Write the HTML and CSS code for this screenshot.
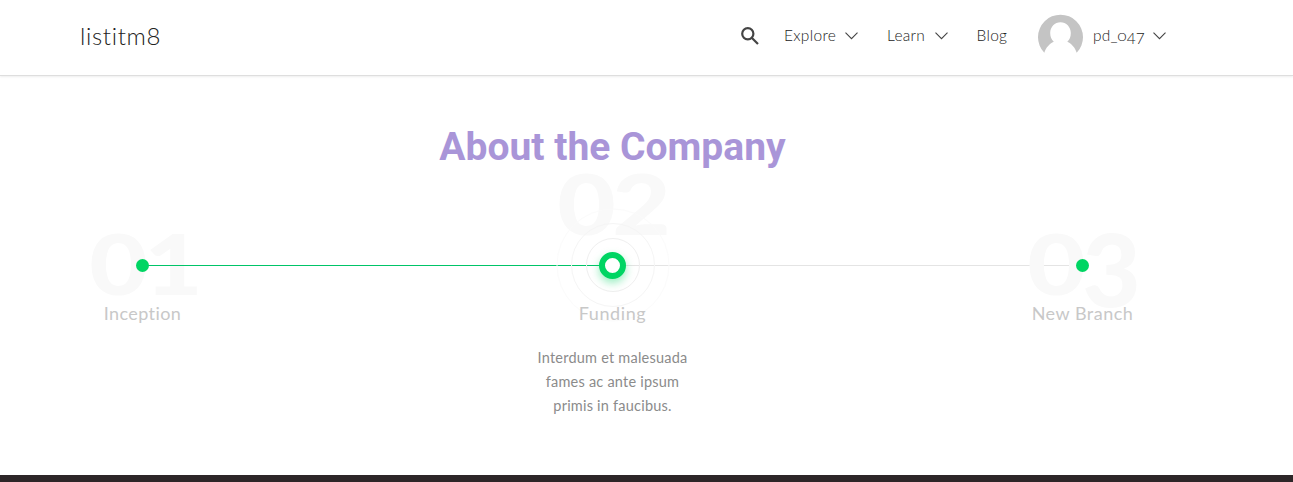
FILE: index.html
```html
<!DOCTYPE html>
<html lang="en">
<head>
<meta charset="utf-8">
<title>listitm8</title>
<link rel="stylesheet" href="styles.css">
</head>
<body>
<header class="header">
  <a class="logo">listitm8</a>
  <nav class="nav">
    <svg class="search" viewBox="0 0 18 18"><circle cx="6.8" cy="6.8" r="5.6"/><path d="M11 11l6 6"/></svg>
    <a class="link explore">Explore</a>
    <svg class="chevron" viewBox="0 0 13 8"><path d="M.5.7l6 6 6-6"/></svg>
    <a class="link learn">Learn</a>
    <svg class="chevron" viewBox="0 0 13 8"><path d="M.5.7l6 6 6-6"/></svg>
    <a class="link blog">Blog</a>
    <svg class="avatar" viewBox="0 0 45 45"><path d="M6.3 38.8A22.5 22.5 0 1 1 38.7 38.8C37.2 33.8 33.6 29.8 29.3 27.8C31.7 25.8 32.8 22.8 32.8 19C32.8 12.9 28.2 8.3 22.5 8.3S12.2 12.9 12.2 19C12.2 22.8 13.5 25.8 15.8 27.8C11.5 29.8 7.8 33.8 6.3 38.8Z"/></svg>
    <a class="link user">pd_<span class="small-digit">0</span><span class="low-digit">47</span></a>
    <svg class="chevron" viewBox="0 0 13 8"><path d="M.5.7l6 6 6-6"/></svg>
  </nav>
</header>
<main class="main">
  <h1 class="title">About the Company</h1>
  <section class="timeline">
    <article class="step done">
      <div class="number first"><span class="digit">0</span><span class="digit">1</span></div>
      <div class="marker"><i class="dot"></i></div>
      <h2 class="label inception">Inception</h2>
    </article>
    <article class="step active">
      <div class="number raised"><span class="digit">0</span><span class="digit">2</span></div>
      <div class="marker">
        <svg class="rings" viewBox="0 0 114 114"><circle cx="57" cy="57" r="26.5" stroke="#efefef"/><circle cx="57" cy="57" r="41.5" stroke="#f5f5f5"/><circle cx="57" cy="57" r="56" stroke="#fbfbfb"/></svg>
        <i class="dot ring"></i>
      </div>
      <h2 class="label funding">Funding</h2>
      <p class="text">Interdum et malesuada<br>fames ac ante ipsum<br>primis in faucibus.</p>
    </article>
    <article class="step">
      <div class="number"><span class="digit">0</span><span class="digit three">3</span></div>
      <div class="marker"><i class="dot"></i></div>
      <h2 class="label branch">New Branch</h2>
    </article>
  </section>
</main>
<footer class="footer"></footer>
</body>
</html>
```
FILE: styles.css
```css
* { box-sizing: border-box; }
body { margin: 0; height: 482px; overflow: hidden; display: flex; flex-direction: column; background: #fff; font-family: Lato, sans-serif; font-variant-ligatures: none; }
.header { flex: none; height: 76px; padding: 0 127px 3px 80px; display: flex; align-items: center; justify-content: space-between; border-bottom: 1px solid #dedede; box-shadow: 0 1px 2px #eee; }
.logo { padding-bottom: 1px; font-size: 24px; font-weight: 300; color: #222; letter-spacing: .65px; }
.nav { display: flex; align-items: center; color: #222; }
.link { padding-bottom: 2px; font-size: 15.5px; line-height: 20px; font-weight: 300; white-space: nowrap; letter-spacing: .3px; }
.user { letter-spacing: .15px; }
.search { width: 18px; height: 18px; margin-right: 25px; fill: none; stroke: #444; stroke-width: 2.2; }
.chevron { width: 13px; height: 8px; fill: none; stroke: #444; stroke-width: 1.1; }
.explore { width: 61px; }
.learn { width: 48px; margin-left: 29px; }
.blog { width: 33px; margin-left: 28.5px; }
.avatar { width: 45px; height: 45px; margin-left: 28.5px; fill: #c4c4c4; }
.user { width: 60px; margin-left: 10px; }
.small-digit, .low-digit { display: inline-block; }
.small-digit { transform: scaleY(.95); transform-origin: 50% 78%; }
.low-digit { transform: none; }
.main { flex: 1; padding: 46px 68px 0 0; }
.title { margin: 0; text-align: center; font: 700 39px/50px Roboto, sans-serif; color: #a995d8; }
.timeline { width: 1410px; margin: 0 0 0 -92.5px; display: grid; grid-template-columns: repeat(3, 470px); padding-top: 80px; }
.step { position: relative; text-align: center; }
.marker { position: relative; height: 26px; display: flex; align-items: center; justify-content: center; }
.marker::before { content: ""; position: absolute; left: 50%; width: 470px; top: 13px; height: 1px; background: #e4e4e4; }
.done .marker::before { background: #00c468; }
.step:last-child .marker::before { display: none; }
.dot { position: relative; width: 13px; height: 13px; border-radius: 50%; background: #00d563; }
.ring { width: 27px; height: 27px; flex: none; border: 6.5px solid #00d563; background: #fff; box-shadow: 0 4px 9px #00d56366; }
.rings { position: absolute; width: 114px; height: 114px; top: -44px; left: 178px; fill: none; stroke-width: 1; }
.number { position: absolute; top: -29px; left: 1px; width: 100%; height: 80px; line-height: 80px; color: #f9f9f9; font-size: 84px; font-weight: 900; display: flex; justify-content: center; }
.first { left: 3px; }
.raised { top: -89px; }
.digit { display: inline-block; transform: scaleX(1.2); margin: 0 3px; }
.three { transform: scale(1.2, 1.2); transform-origin: 50% 13px; }
.label { position: relative; margin: 22px 0 0; font-size: 18px; line-height: 27px; font-weight: 400; color: #c8c8c8; letter-spacing: .4px; }
.funding { letter-spacing: .6px; }
.branch { letter-spacing: .5px; }
.text { margin: 19px 0 0; font-size: 14.5px; line-height: 24px; color: #8b8b8b; letter-spacing: .22px; }
.footer { flex: none; height: 7px; background: #2d2628; }
.small-digit { transform: scaleY(.73); }
.low-digit { transform: translateY(3px); }
```
